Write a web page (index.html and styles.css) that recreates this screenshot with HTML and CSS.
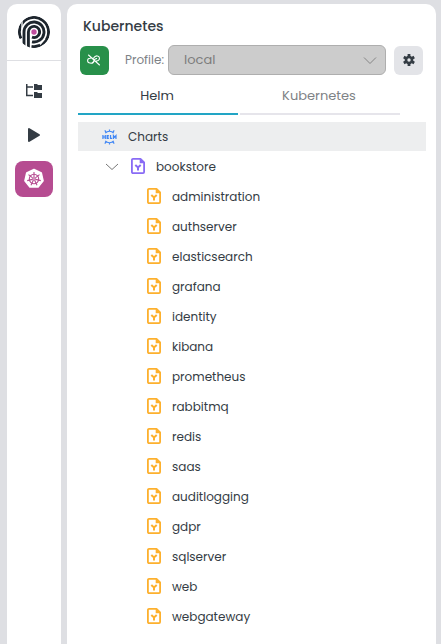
FILE: index.html
```html
<!DOCTYPE html>
<html lang="en">
<head>
<meta charset="utf-8">
<title>Kubernetes</title>
<link rel="stylesheet" href="styles.css">
</head>
<body>
<svg class="defs" aria-hidden="true">
  <symbol id="file" viewBox="0 0 14 16">
    <path d="M2 .9h7.500L13.100 4.500V14a1.100 1.100 0 0 1-1.100 1.100H2A1.100 1.100 0 0 1 .9 14V2A1.100 1.100 0 0 1 2 .9z" fill="none" stroke="currentColor" stroke-width="1.800" stroke-linejoin="round"/>
    <path d="M8.700 .7V5.300h4.800z" fill="currentColor"/>
    <path d="M4.300 6.900L7 9.400l2.700-2.500M7 9.200v3.300" fill="none" stroke="currentColor" stroke-width="2"/>
  </symbol>
</svg>
<div class="app">
  <nav class="rail">
    <div class="brand">
      <svg width="34" height="34" viewBox="0 0 34 34" fill="none" stroke="#1d252d" stroke-width="2.900">
        <clipPath id="disc"><circle cx="17" cy="17" r="16"/></clipPath>
        <g clip-path="url(#disc)">
          <path d="M3.900 23.500A14.600 14.600 0 1 1 14.500 31.400"/>
          <path d="M7 34V17A10 10 0 1 1 15 26.800"/>
          <path d="M11.400 34V17A5.600 5.600 0 1 1 15 22.200"/>
          <path d="M5 1v13M28 23.500l-5 6" stroke="#fff" stroke-width="1.300"/>
        </g>
        <circle cx="17" cy="17" r="2.700" fill="#c04d9e" stroke="none"/>
      </svg>
    </div>
    <div class="tool">
      <svg width="18" height="16" viewBox="0 0 18 16" fill="#343c44"><path d="M1 1h1.500v2.300H8V4.700H2.500v7H8v1.500H1zM9 1h3l1 1h4v5H9zM9 9h3l1 1h4v5H9z"/></svg>
    </div>
    <div class="tool play">
      <svg width="14" height="16" viewBox="0 0 14 16"><path d="M2 2v12l10-6z" fill="#343c44" stroke="#343c44" stroke-width="2" stroke-linejoin="round"/></svg>
    </div>
    <div class="tool active">
      <svg width="22" height="22" viewBox="0 0 22 22">
        <path d="M11 1.500l7.300 3.500 1.800 7.800-5 6.200H6.900l-5-6.200L3.700 5z" fill="#fff" stroke="#fff" stroke-width="1.500" stroke-linejoin="round"/>
        <g fill="none" stroke="#b64c91" stroke-width="1.100"><circle cx="11" cy="11" r="4.700"/><path d="M11 4v5.200M16.500 6.600l-4.100 3.300M17.800 12.600l-5.100-1.200M14 17.300l-2.200-4.700M8 17.300l2.200-4.700M4.200 12.600l5.100-1.200M5.500 6.600l4.100 3.300"/><circle cx="11" cy="11" r="1.300"/></g>
      </svg>
    </div>
  </nav>
  <main class="panel">
    <h1>Kubernetes</h1>
    <div class="profile">
      <button class="link" aria-label="Disconnect"><svg width="14" height="12" viewBox="0 0 14 12" fill="none" stroke="#fff" stroke-width="1.100" stroke-linecap="round"><path d="M1.500 1l11 10M5 3.700L3 4.200A2.400 2.400 0 0 0 3 9l1.200.3c2 0 2.600-1.300 2.600-2.600M6.200 4.500C7.800 2.200 9 1.500 10.500 2a2.300 2.300 0 0 1 .6 4.400l-1.600.5M5 9L7 7.300M7.300 5.500L9.600 4.500"/></svg></button>
      <span class="label">Profile:</span>
      <div class="select"><span>local</span><svg width="14" height="9" viewBox="0 0 14 9" fill="none" stroke="#858585"><path d="M1 1.500l6 6 6-6"/></svg></div>
      <button class="gear" aria-label="Settings"><svg width="12" height="12" viewBox="0 0 12 12"><g stroke="#343c44" stroke-width="2.800"><path d="M6 0v12M.8 3l10.400 6M.8 9l10.400-6"/></g><circle cx="6" cy="6" r="4.300" fill="#343c44"/><circle cx="6" cy="6" r="1.700" fill="#e3e4e8"/></svg></button>
    </div>
    <div class="tabs"><div class="tab on">Helm</div><div class="tab">Kubernetes</div></div>
    <div class="tree">
      <div class="row root">
        <svg width="15" height="16" viewBox="0 0 16 16" fill="none" stroke="#3f86f5" stroke-width="1.300"><path d="M3.500 3.800a6.200 6.200 0 0 1 9 0M3.500 12.200a6.200 6.200 0 0 0 9 0M8 0v2.300M3 .9l1.300 2M13 .9l-1.300 2M8 13.700V16M3 15.100l1.300-2M13 15.100l-1.300-2"/><path d="M1 5.900v4.200M3.500 5.900v4.200M1 8h2.500M7.300 6.500H5.500v3h1.800M5.500 8h1.500M9.100 5.900v3.600h1.700M12.200 10.100V6.500l1.300 1.700 1.400-1.700v3.600"/></svg>
        <span>Charts</span>
      </div>
      <div class="row chart">
        <svg class="chev" width="14" height="8" viewBox="0 0 14 8" fill="none" stroke="#777"><path d="M1 1l6 5.500L13 1"/></svg>
        <svg class="file violet"><use href="#file"/></svg><span>bookstore</span>
      </div>
      <div class="row"><svg class="file"><use href="#file"/></svg><span>administration</span></div>
      <div class="row"><svg class="file"><use href="#file"/></svg><span>authserver</span></div>
      <div class="row"><svg class="file"><use href="#file"/></svg><span>elasticsearch</span></div>
      <div class="row"><svg class="file"><use href="#file"/></svg><span>grafana</span></div>
      <div class="row"><svg class="file"><use href="#file"/></svg><span>identity</span></div>
      <div class="row"><svg class="file"><use href="#file"/></svg><span>kibana</span></div>
      <div class="row"><svg class="file"><use href="#file"/></svg><span>prometheus</span></div>
      <div class="row"><svg class="file"><use href="#file"/></svg><span>rabbitmq</span></div>
      <div class="row"><svg class="file"><use href="#file"/></svg><span>redis</span></div>
      <div class="row"><svg class="file"><use href="#file"/></svg><span>saas</span></div>
      <div class="row"><svg class="file"><use href="#file"/></svg><span>auditlogging</span></div>
      <div class="row"><svg class="file"><use href="#file"/></svg><span>gdpr</span></div>
      <div class="row"><svg class="file"><use href="#file"/></svg><span>sqlserver</span></div>
      <div class="row"><svg class="file"><use href="#file"/></svg><span>web</span></div>
      <div class="row"><svg class="file"><use href="#file"/></svg><span>webgateway</span></div>
    </div>
  </main>
</div>
</body>
</html>
```
FILE: styles.css
```css
* { box-sizing: border-box; }
body { margin: 0; background: #dedfe3; color: #343c44; font: 13px/20px Poppins, Inter, sans-serif; }
svg { display: block; flex: none; }
.defs { display: none; }
.app { display: flex; gap: 6px; height: 644px; padding: 4px 5px 0 7px; overflow: hidden; }
.rail { flex: none; width: 54px; background: #fff; border-radius: 10px 10px 0 0; display: flex; flex-direction: column; align-items: center; }
.brand { width: 100%; height: 57px; padding-top: 11px; border-bottom: 1px solid #dedfe3; display: flex; justify-content: center; }
.tool { width: 38px; height: 36px; display: grid; place-items: center; margin-top: 12px; }
.tool + .tool { margin-top: 8px; }
.tool.active { background: #b64c91; border-radius: 8px; }
.panel { flex: 1; min-width: 0; background: #fff; border-radius: 10px 10px 0 0; padding: 0 10px 0 11px; }
h1 { margin: 10px 0 0 5px; font-size: 14px; line-height: 24px; font-weight: 500; }
.profile { display: flex; align-items: center; height: 30px; margin: 7px 0 0 1.5px; }
button { border: 0; padding: 0; border-radius: 6px; height: 29px; display: grid; place-items: center; flex: none; }
.link { width: 29px; background: #28904a; }
.label { flex: none; width: 43px; margin-left: 16.5px; color: #7e8286; white-space: nowrap; font-size: 12px; }
.select { flex: none; width: 218px; height: 30px; background: #ccc; border: 1px solid #aeaeae; border-radius: 6px; padding: 0 8px 0 15px; display: flex; align-items: center; justify-content: space-between; color: #7d7d7d; }
.gear { width: 29px; background: #e3e4e8; margin-left: 8px; }
.tabs { display: flex; gap: 2px; height: 40px; }
.tab { width: 160px; padding-right: 2px; border-bottom: 2px solid #e6e5eb; text-align: center; line-height: 41px; color: #7e8286; }
.tab.on { border-color: #22a5c5; color: #343c44; }
.tree { padding-top: 7px; font-size: 12px; }
.row { height: 30px; display: flex; align-items: center; gap: 11px; padding-left: 69px; }
.row.root { height: 29px; margin: 0 0 1px -.5px; background: #edeeef; padding-left: 24.5px; width: 348px; }
.row.chart { padding-left: 27px; gap: 12px; }
.row.chart span { margin-left: -1px; }
.file { width: 14px; height: 16px; margin-bottom: 2px; color: #fdb02d; }
.file.violet { color: #896bf5; }
```
